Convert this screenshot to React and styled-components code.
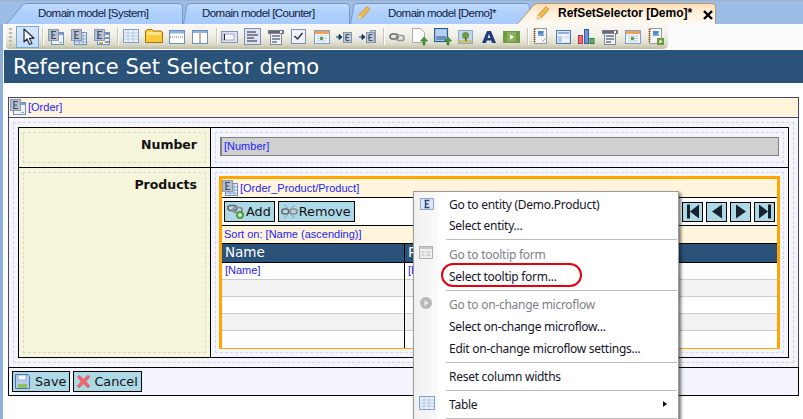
import React from "react";
import styled, { createGlobalStyle } from "styled-components";

const Global = createGlobalStyle`
  html, body { margin: 0; padding: 0; background: #fff; overflow: hidden; }
  #root { width: 803px; height: 419px; }
  * { box-sizing: border-box; }
`;

const Page = styled.div`
  position: relative; width: 803px; height: 419px; overflow: hidden;
  display: flex; flex-direction: column; background: #fff;
  font-family: "Liberation Sans", Arial, sans-serif;
`;
const TabStrip = styled.div`
  height: 24px; flex: none; display: flex; padding: 2px 0 0 6px;
  background: #9dbde6; border-top: 1px solid #a3b1c6;
`;
const Tab = styled.div`
  position: relative; flex: none; height: 21px;
  width: ${p => p.$w}px; margin-left: ${p => p.$ml || 0}px;
  z-index: ${p => p.$z || 1};
  display: flex; align-items: center;
  padding-left: ${p => p.$pl}px; padding-bottom: 2px;
  font-size: 11.5px; letter-spacing: -0.55px; color: #10203a;
  ${p => p.$active && "font-weight: 700; font-size: 12px; letter-spacing: -0.03px; color: #000;"}
  white-space: pre;
`;
const TabFill = styled.svg`
  position: absolute; left: 0; top: 0;
`;
const TabLabel = styled.span`position: relative;`;
const TabPencil = styled.svg`position: absolute; left: ${p => p.$x}px; top: 2px;`;
const TabClose = styled.span`
  position: absolute; right: 2px; top: 6px; width: 12px; height: 12px;
`;

const Frame = styled.div`
  flex: 1; display: flex; flex-direction: column;
  border-left: 3px solid #8eafde; box-shadow: inset 1px 0 0 #fff;
`;
const ToolRow = styled.div`
  height: 26px; flex: none; background: #fbfbfb; padding-left: 3px;
  display: flex; border-bottom: 1px solid #fff;
`;
const Toolbar = styled.div`
  width: 662px; height: 25px; display: flex; align-items: center; padding-left: 3px;
  border-radius: 0 0 5px 3px;
  background: linear-gradient(#f9f8f4 0%, #f1f0e8 45%, #dddccb 80%, #bdbca0 100%);
`;
const Grip = styled.span`
  width: 3px; height: 17px; margin: 0 4px 0 0;
  background: repeating-linear-gradient(#b9b9b0 0 2px, transparent 2px 4px);
`;
const ToolBtn = styled.span`
  flex: none; width: 23px; height: 22px;
  display: flex; align-items: center; justify-content: center;
  ${p => p.$active && "background: linear-gradient(#d6e8ff,#c3dcfb); border: 1px solid #7ba6dc;"}
`;
const ToolSep = styled.span`
  flex: none; width: 1px; height: 17px; margin: 0 1px 0 ${p => p.$l || 3}px; background: #c8c7b8;
  box-shadow: 1px 0 0 #fff;
`;
const Header = styled.div`
  height: 33px; flex: none; margin-left: 1px; background: #2b5278; color: #fff;
  display: flex; align-items: center; padding: 1px 0 0 9px;
  font-family: "DejaVu Sans", Verdana, sans-serif; font-size: 21px;
`;
const Content = styled.div`
  flex: 1; padding: 14px 4px 0 5px; display: flex; flex-direction: column;
`;
const TitleBar = styled.div`
  height: 21px; flex: none; display: flex; align-items: center; gap: 2px; padding: 0 0 1px 1px;
  background: #fff5dc; border: 1px solid #46466a;
  color: #2222ff; font-size: 11px;
`;
const FormBody = styled.div`
  height: 249px; flex: none; background: #f3f4fc;
  border: solid #46466a; border-width: 0 1px; padding: 4px;
`;
const Dashed = styled.div`
  height: 100%; border: 1px dashed #d4d4d8; padding: 4px;
`;
const FormTable = styled.div`
  height: 231px; border: 1px solid #000; display: grid;
  grid-template-columns: 192px 1fr; grid-template-rows: 40px 1fr;
`;
const LabelCell = styled.div`
  background: #f5f5dc; padding: 4px; border-right: 1px solid #000;
  ${p => p.$first && "border-bottom: 1px solid #000;"}
`;
const DashedLabel = styled.div`
  height: 100%; border: 1px dashed #d8d8d0; padding: 4px 8px 0 0;
  text-align: right; font: bold 12.5px "DejaVu Sans", Verdana, sans-serif; color: #111;
`;
const ValueCell = styled.div`
  background: #f3f4fc; padding: 4px;
  ${p => p.$first && "border-bottom: 1px solid #000;"}
`;
const DashedValue = styled.div`
  height: 100%; border: 1px dashed #d8d8e0; padding: ${p => p.$p || "4px"};
`;
const TextInput = styled.div`
  height: 19px; background: #d0d0d0; border: 1px solid #808080; border-width: 1px 1px 1px 2px;
  display: flex; align-items: center; padding: 0 0 1px 2px; color: #2222ff; font-size: 11px;
`;
const DataGrid = styled.div`
  height: 173px; border: 3px solid #ffa500; background: #fff; display: flex; flex-direction: column;
`;
const GridTitle = styled.div`
  height: 18px; flex: none; background: #fff5dc; display: flex; align-items: center; gap: 2px; padding-bottom: 1px;
  color: #2222ff; font-size: 11px;
`;
const GridTools = styled.div`
  height: 29px; flex: none; background: #fff; display: flex; align-items: center; gap: 3px; padding-left: 2px;
  border: solid #000; border-width: 1px 0;
`;
const Action = styled.div`
  height: 21px; flex: none; display: flex; align-items: center; gap: ${p => p.$gap}px;
  padding: 0 3px 1px 2px; background: #add8e6; border: 1px solid #000;
  font: 12.8px "DejaVu Sans", Verdana, sans-serif; color: #111;
`;
const Pager = styled.div`
  margin-left: auto; margin-right: 2px; display: flex; gap: 3px;
`;
const PagerBtn = styled.div`
  width: 21px; height: 20px; background: #add8e6; border: 1px solid #000;
  display: flex; align-items: center; justify-content: center;
`;
const SortRow = styled.div`
  height: 17px; flex: none; background: #fff5dc; display: flex; align-items: center; padding: 0 0 1px 2px;
  color: #2222ff; font-size: 11px;
`;
const GridHead = styled.div`
  height: 20px; flex: none; background: #2b5278; color: #fff; display: grid;
  grid-template-columns: 183px 1fr; border-bottom: 1px solid #000;
  border-top: 1px solid #000;
  font: 13.5px "DejaVu Sans", Verdana, sans-serif;
`;
const HeadCell = styled.div`
  padding-left: 3px; line-height: 17px; overflow: hidden;
  ${p => p.$first && "border-right: 1px solid #000;"}
`;
const GridRow = styled.div`
  height: 17px; flex: none; display: grid; grid-template-columns: 183px 1fr;
  background: ${p => p.$alt ? "#f2f2f2" : "#fff"};
  ${p => !p.$last && "border-bottom: 1px solid #ccc;"}
  color: #2222ff; font-size: 11px; line-height: 14px;
`;
const RowCell = styled.div`
  padding-left: 3px; overflow: hidden;
  ${p => p.$first && "border-right: 1px solid #000; height: 17px; margin-bottom: -1px;"}
`;
const Footer = styled.div`
  height: 29px; flex: none; background: #f3f4fc; border: 1px solid #000;
  display: flex; align-items: center; gap: 3px; padding-left: 3px;
`;
const Menu = styled.div`
  position: absolute; left: 413px; top: 191px; width: 266px; height: 240px;
  background: linear-gradient(90deg, #f0f0f0 0, #fafafa 24px, #fff 25px);
  border: 1px solid #9a9a9a; box-shadow: 2px 2px 3px rgba(0,0,0,.55);
  padding-top: 1px; font: 12px "Noto Sans", "Open Sans", sans-serif; color: #1a1a2a;
`;
const MenuItem = styled.div`
  height: ${p => p.$h || 22}px; flex: none; display: flex; align-items: center; padding-left: 35px; position: relative;
  letter-spacing: -0.27px;
  color: ${p => p.$off ? "#80808a" : "#14142a"};
`;
const MenuIcon = styled.span`
  position: absolute; left: 5px; top: 3px; width: 16px; height: 16px; display: flex;
`;
const MenuSep = styled.div`
  height: 1px; margin: 3px 1px ${p => p.$after || 2}px 32px; background: #bdbdbd;
`;
const Arrow = styled.span`
  position: absolute; right: 11px; top: 8px; width: 0; height: 0;
  border-left: 4px solid #111; border-top: 3.5px solid transparent; border-bottom: 3.5px solid transparent;
`;
const RedRing = styled.span`
  position: absolute; left: 27px; top: 71px; width: 141px; height: 24px;
  border: 2px solid #e8000e; border-radius: 12px; pointer-events: none;
`;

const EBox = () => (
  <>
    <rect x=".5" y=".5" width="10" height="11" fill="#b7bfcc" stroke="#8f98a8" />
    <path d="M3 2.5h5M4 2.5v7M4 6h3M3 9.5h5" stroke="#33506f" strokeWidth="1.2" fill="none" />
  </>
);
const FormIcon = ({ s = 16 }) => (
  <svg width={s} height={s} viewBox="0 0 16 16">
    <rect x="3.5" y="3.5" width="12" height="12" fill="#eef3fb" stroke="#6d8fc0" />
    <rect x="4" y="4" width="11" height="2" fill="#7da3d8" />
    <rect x="11" y="13" width="3" height="1" fill="#8aa" />
    <EBox />
  </svg>
);
const GridFormIcon = ({ s = 16, list }) => (
  <svg width={s} height={s} viewBox="0 0 16 16">
    <rect x="3.5" y="3.5" width="12" height="12" fill="#eef3fb" stroke="#6d8fc0" />
    {list ? <path d="M11 5h4M11 9h4M11 13h4" stroke="#234" /> :
      <path d="M4 7h11M4 10h11M4 13h11M8 4v11M12 4v11" stroke="#7da3d8" />}
    {list && <path d="M5 14h4" stroke="#a98a2a" strokeWidth="1.4" />}
    <EBox />
  </svg>
);
const Cursor = () => (
  <svg width="16" height="18" viewBox="0 0 16 18">
    <path d="M4 1v13l3-3 2.5 5.5 2.5-1-2.6-5.2H14z" fill="#f2f6fb" stroke="#26303c" strokeWidth="1.2" strokeLinejoin="round" />
  </svg>
);
const TableIcon = () => (
  <svg width="16" height="15" viewBox="0 0 16 15">
    <rect x=".5" y=".5" width="15" height="13" fill="#eef3fb" stroke="#7b9fd2" />
    <path d="M1 4h14M1 7h14M1 10h14M5 1v12M10 1v12" stroke="#b4c9e8" />
  </svg>
);
const FolderIcon = () => (
  <svg width="18" height="15" viewBox="0 0 18 15">
    <path d="M.5 13.5V2L2 .5h5L8 2h8l1.5 1v10.5z" fill="#ffc93c" stroke="#a47508" />
    <path d="M2 3h14v3H2z" fill="#ffe38a" />
  </svg>
);
const SplitH = () => (
  <svg width="16" height="14" viewBox="0 0 16 14">
    <rect x=".5" y=".5" width="15" height="13" fill="#fff" stroke="#6d8fc0" />
    <rect x="1" y="1" width="14" height="2.5" fill="#8fb0de" />
    <path d="M1 7h14" stroke="#666" strokeDasharray="1 1" />
  </svg>
);
const SplitV = () => (
  <svg width="16" height="14" viewBox="0 0 16 14">
    <rect x=".5" y=".5" width="15" height="13" fill="#fff" stroke="#6d8fc0" />
    <rect x="1" y="1" width="14" height="2" fill="#8fb0de" />
    <path d="M8 3v10" stroke="#777" />
  </svg>
);
const TextBoxIcon = () => (
  <svg width="17" height="12" viewBox="0 0 17 12">
    <rect x=".5" y=".5" width="16" height="11" fill="#dfe2f5" stroke="#8594b4" />
    <rect x="2" y="3" width="11" height="6" fill="#f4f5ff" stroke="#aab" />
    <path d="M3.5 3v6" stroke="#224" />
  </svg>
);
const TextAreaIcon = () => (
  <svg width="17" height="17" viewBox="0 0 17 17">
    <rect x=".5" y=".5" width="16" height="16" fill="#dfe2f5" stroke="#7f8fb0" />
    <path d="M3 4h9M3 7h11M3 10h7M3 13h10" stroke="#223" />
  </svg>
);
const DropIcon = () => (
  <svg width="16" height="16" viewBox="0 0 16 16">
    <rect x=".5" y="1.5" width="15" height="3" fill="#667" stroke="#778" />
    <rect x="12" y="2" width="2" height="2" fill="#fff" />
    <rect x="2.5" y="4.5" width="11" height="11" fill="#f2f2fb" stroke="#889" />
    <path d="M4 7h8M4 10h8M4 13h5" stroke="#234" />
  </svg>
);
const CheckIcon = () => (
  <svg width="15" height="15" viewBox="0 0 15 15">
    <rect x=".5" y=".5" width="14" height="14" fill="#eef0fb" stroke="#7f8fb0" />
    <path d="M3.5 7l3 3 5-6" stroke="#334" strokeWidth="1.5" fill="none" />
  </svg>
);
const CalIcon = () => (
  <svg width="16" height="14" viewBox="0 0 16 14">
    <rect x=".5" y=".5" width="15" height="13" fill="#f3f6fb" stroke="#7b9fd2" />
    <rect x="1" y="1" width="14" height="3" fill="#f4a050" />
    <path d="M3 6h10M3 8.5h10M3 11h10" stroke="#bcd" />
    <rect x="6" y="7" width="3" height="3" fill="#5aa050" />
  </svg>
);
const RefIcon = ({ stack }) => (
  <svg width="18" height="16" viewBox="0 0 18 16">
    {stack && <rect x="11.5" y="1.5" width="5" height="12" fill="#c5d2e4" stroke="#8a9bb5" />}
    <path d="M0 8h4M3 5.5L6 8l-3 2.5z" fill="#163a6e" stroke="#163a6e" />
    <rect x="7.5" y="3.5" width="8" height="10" fill="#c0cad8" stroke="#8a93a3" />
    <path d="M10 5.5h3.5M10 5.5v6M10 8.5h3M10 11.5h3.5" stroke="#35506f" strokeWidth="1.2" fill="none" />
  </svg>
);
const ChainIcon = ({ s = 16 }) => (
  <svg width={s} height={s * .75} viewBox="0 0 16 12">
    <rect x="1" y="3" width="8" height="5" rx="2.5" fill="none" stroke="#68686c" strokeWidth="1.7" />
    <rect x="7" y="4.5" width="8" height="5" rx="2.5" fill="none" stroke="#98989c" strokeWidth="1.7" />
  </svg>
);
const NewDoc = () => (
  <svg width="17" height="18" viewBox="0 0 17 18">
    <path d="M1.5 .5h8l4 4v10h-12z" fill="#fbfbfb" stroke="#aaa" />
    <path d="M12 17v-4H9.5l3.5-4 3.5 4H14v4z" fill="#4a9d3c" stroke="#2a6d20" strokeWidth=".6" />
  </svg>
);
const PictureUp = () => (
  <svg width="18" height="18" viewBox="0 0 18 18">
    <rect x=".5" y=".5" width="13" height="13" fill="#b4d0f0" stroke="#2a5a95" strokeWidth="1.2" />
    <rect x="2" y="8" width="10" height="4" fill="#6a90c0" />
    <path d="M13 17v-4h-2.5l3.5-4 3.5 4H15v4z" fill="#4a9d3c" stroke="#2a6d20" strokeWidth=".6" />
  </svg>
);
const TreePic = () => (
  <svg width="15" height="14" viewBox="0 0 15 14">
    <rect x=".5" y=".5" width="14" height="13" fill="#c0d8ee" stroke="#8fa8c8" />
    <rect x="1" y="10" width="13" height="3" fill="#d0c070" />
    <circle cx="7.5" cy="5.5" r="3.5" fill="#6f9a3f" />
    <rect x="7" y="8" width="1.5" height="3" fill="#6a5a30" />
  </svg>
);
const LetterA = () => (
  <svg width="14" height="14" viewBox="0 0 14 14">
    <path d="M0 13L5 1h4l5 12h-4l-.8-2.5H4.8L4 13zM5.7 8h2.6L7 4z" fill="#1e3e7e" />
  </svg>
);
const VideoIcon = () => (
  <svg width="17" height="12" viewBox="0 0 17 12">
    <rect width="17" height="12" fill="#6f9a3f" />
    <rect x="4" y="1" width="9" height="10" fill="#8cb060" />
    <path d="M7 3.5l4 2.5-4 2.5z" fill="#fff" />
  </svg>
);
const Note = ({ pen, play }) => (
  <svg width="16" height="17" viewBox="0 0 16 17">
    <rect x="1.5" y=".5" width="12" height="15" fill="#f4f6f8" stroke="#999" />
    <path d="M1.5 1v14" stroke="#a25a20" strokeWidth="2" strokeDasharray="1 1" />
    <path d="M5 4h6M5 7h6" stroke="#4e88d0" strokeWidth="1.4" />
    <rect x="5" y="3" width="5" height="3" fill="#4e88d0" />
    {pen && <path d="M9 14l4-4" stroke="#aaa" />}
    {play && <><rect x="9" y="10" width="7" height="7" fill="#6f9a3f" /><path d="M11.5 11.5l3 2-3 2z" fill="#fff" /></>}
  </svg>
);
const LayoutIcon = () => (
  <svg width="15" height="14" viewBox="0 0 15 14">
    <rect x=".5" y=".5" width="14" height="13" fill="#eef3fb" stroke="#4e78b0" strokeWidth="1.2" />
    <rect x="2" y="2" width="11" height="2" fill="#8fb0de" />
    <rect x="2" y="6" width="4" height="6" fill="#b9cde8" />
    <rect x="8" y="6" width="5" height="2" fill="#d4dff0" />
  </svg>
);
const BarsIcon = () => (
  <svg width="17" height="15" viewBox="0 0 17 15">
    <rect x=".5" y="6.5" width="4" height="8" fill="#f06a78" stroke="#b03545" />
    <rect x="6.5" y=".5" width="4" height="14" fill="#6a95d8" stroke="#33609f" />
    <rect x="12" y="9.5" width="4" height="5" fill="#6bb06b" stroke="#2d7a3a" />
  </svg>
);

const Floppy = () => (
  <svg width="15" height="15" viewBox="0 0 15 15">
    <path d="M.5.5h12l2 2v12H.5z" fill="#b6cdec" stroke="#4a74ac" />
    <rect x="3" y="1" width="8" height="5" fill="#f4f7fc" stroke="#6c8fbf" strokeWidth=".6" />
    <rect x="3" y="10" width="9" height="4" fill="#8fc060" />
  </svg>
);
const RedX = () => (
  <svg width="15" height="15" viewBox="0 0 15 15">
    <path d="M1.5 3L3 1.2l4.5 4 4.5-4L13.8 3l-4 4.5 4 4.5-1.8 1.8-4.5-4-4.5 4L1.2 12l4-4.5z" fill="#f4676b" stroke="#e04c52" strokeWidth=".6" />
  </svg>
);
const AddIcon = () => (
  <svg width="18" height="16" viewBox="0 0 18 16">
    <rect x=".8" y="2.5" width="9" height="5" rx="2.5" fill="none" stroke="#68686c" strokeWidth="1.7" />
    <rect x="6" y="4.5" width="9" height="5" rx="2.5" fill="none" stroke="#8b8b90" strokeWidth="1.7" />
    <circle cx="13" cy="12" r="3.6" fill="#5cae4a" stroke="#2f7f2c" strokeWidth=".7" />
    <path d="M11 12h4M13 10v4" stroke="#fff" strokeWidth="1.2" />
  </svg>
);
const RemoveIcon = () => (
  <svg width="17" height="15" viewBox="0 0 17 15">
    <rect x=".8" y="5" width="7" height="5" rx="2.5" fill="none" stroke="#6b6b70" strokeWidth="1.6" />
    <rect x="9" y="5" width="7" height="5" rx="2.5" fill="none" stroke="#8b8b90" strokeWidth="1.6" />
    <path d="M3 1l4 3M14 1l-4 3M3 14l4-3M14 14l-4-3" stroke="#7aa0d8" />
  </svg>
);
const PagerIcon = ({ kind }) => {
  const paths = {
    first: "M2 1h3v14H2zM14 1v14L5 8z",
    prev: "M13 1v14L3 8z",
    next: "M3 1v14l10-7z",
    last: "M2 1v14l9-7zM11 1h3v14h-3z",
  };
  return <svg width="16" height="17" viewBox="0 0 16 16"><path d={paths[kind]} fill="#18222e" /></svg>;
};
const EntityMenuIcon = () => (
  <svg width="16" height="16" viewBox="0 0 16 16">
    <rect x="1.5" y="2.5" width="13" height="11" fill="#dde5f2" stroke="#93a8c8" />
    <path d="M5.5 4.5h5M6.5 4.5v7M6.5 8h3M5.5 11.5h5" stroke="#28487a" strokeWidth="1.3" fill="none" />
  </svg>
);
const TooltipMenuIcon = () => (
  <svg width="16" height="14" viewBox="0 0 16 14">
    <rect x=".5" y=".5" width="13" height="12" fill="#efefef" stroke="#b0b0b0" />
    <rect x="1" y="1" width="12" height="2" fill="#c8c8c8" />
    <path d="M2.5 6h3M2.5 9h3M7.5 6h4M7.5 9h4" stroke="#b5b5b5" />
  </svg>
);
const FlowMenuIcon = () => (
  <svg width="14" height="14" viewBox="0 0 14 14">
    <circle cx="7" cy="7" r="6" fill="#b8b8b8" />
    <path d="M5.5 4l4 3-4 3z" fill="#eee" />
  </svg>
);
const TabPencilIcon = ({ x }) => (
  <TabPencil $x={x} width="14" height="15" viewBox="0 0 14 15">
    <path d="M1 14l1-4 8-8.5 3 2.8L5 13z" fill="#f3b94c" stroke="#b98a3c" strokeWidth=".8" />
    <path d="M1 14l1-4 3 3z" fill="#f6e4c4" />
  </TabPencil>
);
const TabShape = ({ w, active, notch }) => {
  const stroke = active ? "#b79a6e" : "#6e98ce";
  const id = active ? "tabA" : "tabI";
  const d = `M.5 21 L${notch - 3} 1.8 Q${notch - 1} .5 ${notch + 2} .5 H${w - 4} Q${w - .5} .5 ${w - .5} 4 V21`;
  return (
    <TabFill width={w} height="21">
      <defs>
        <linearGradient id={id} x1="0" y1="0" x2="0" y2="1">
          <stop offset="0" stopColor={active ? "#ffdcb0" : "#c3dcfd"} />
          <stop offset=".45" stopColor={active ? "#fff0dc" : "#afd0fc"} />
          <stop offset="1" stopColor={active ? "#fffaf3" : "#a8cbfb"} />
        </linearGradient>
      </defs>
      <path d={d} fill={`url(#${id})`} stroke={stroke} />
    </TabFill>
  );
};
const TabItem = ({ w, ml, z, pl, notch = 20, active, pencil, close, children }) => (
  <Tab $w={w} $ml={ml} $z={z} $pl={pl} $active={active}>
    <TabShape w={w} active={active} notch={notch} />
    {pencil !== undefined && <TabPencilIcon x={pencil} />}
    <TabLabel>{children}</TabLabel>
    {close && (
      <TabClose>
        <svg width="12" height="12" viewBox="0 0 12 12">
          <path d="M2 2l8 8M10 2l-8 8" stroke="#000" strokeWidth="2.4" />
        </svg>
      </TabClose>
    )}
  </Tab>
);

export default function App() {
  return (
    <Page>
      <Global />
      <TabStrip>
        <TabItem w={177} z={4} pl={32}>Domain model [System]</TabItem>
        <TabItem w={167} z={3} pl={19} notch={7}>Domain model [Counter]</TabItem>
        <TabItem w={180} z={2} pl={38} notch={7} pencil={7}>Domain model [Demo]*</TabItem>
        <TabItem w={199} ml={-13} z={5} pl={41} active pencil={19} close>RefSetSelector [Demo]*</TabItem>
      </TabStrip>
      <Frame>
        <ToolRow>
          <Toolbar>
            <Grip />
            <ToolBtn $active><Cursor /></ToolBtn>
            <ToolSep $l={3} />
            <ToolBtn><FormIcon /></ToolBtn>
            <ToolBtn><GridFormIcon /></ToolBtn>
            <ToolBtn><GridFormIcon list /></ToolBtn>
            <ToolSep $l={4} />
            <ToolBtn><TableIcon /></ToolBtn>
            <ToolBtn><FolderIcon /></ToolBtn>
            <ToolBtn><SplitH /></ToolBtn>
            <ToolBtn><SplitV /></ToolBtn>
            <ToolSep $l={5} />
            <ToolBtn><TextBoxIcon /></ToolBtn>
            <ToolBtn><TextAreaIcon /></ToolBtn>
            <ToolBtn><DropIcon /></ToolBtn>
            <ToolBtn><CheckIcon /></ToolBtn>
            <ToolBtn><CalIcon /></ToolBtn>
            <ToolBtn><RefIcon /></ToolBtn>
            <ToolBtn><RefIcon stack /></ToolBtn>
            <ToolSep $l={4} />
            <ToolBtn><ChainIcon /></ToolBtn>
            <ToolBtn><NewDoc /></ToolBtn>
            <ToolBtn><PictureUp /></ToolBtn>
            <ToolBtn><TreePic /></ToolBtn>
            <ToolBtn><LetterA /></ToolBtn>
            <ToolBtn><VideoIcon /></ToolBtn>
            <ToolSep $l={4} />
            <ToolBtn><Note pen /></ToolBtn>
            <ToolBtn><LayoutIcon /></ToolBtn>
            <ToolBtn><BarsIcon /></ToolBtn>
            <ToolBtn><DropIcon /></ToolBtn>
            <ToolBtn><CalIcon /></ToolBtn>
            <ToolBtn><Note play /></ToolBtn>
          </Toolbar>
        </ToolRow>
        <Header>Reference Set Selector demo</Header>
        <Content>
          <TitleBar><FormIcon />[Order]</TitleBar>
          <FormBody>
            <Dashed>
              <FormTable>
                <LabelCell $first><DashedLabel>Number</DashedLabel></LabelCell>
                <ValueCell $first><DashedValue><TextInput>[Number]</TextInput></DashedValue></ValueCell>
                <LabelCell><DashedLabel>Products</DashedLabel></LabelCell>
                <ValueCell>
                  <DashedValue $p="3px">
                    <DataGrid>
                      <GridTitle><GridFormIcon />[Order_Product/Product]</GridTitle>
                      <GridTools>
                        <Action $gap={1}><AddIcon />Add</Action>
                        <Action $gap={1}><RemoveIcon />Remove</Action>
                        <Pager>
                          <PagerBtn><PagerIcon kind="first" /></PagerBtn>
                          <PagerBtn><PagerIcon kind="prev" /></PagerBtn>
                          <PagerBtn><PagerIcon kind="next" /></PagerBtn>
                          <PagerBtn><PagerIcon kind="last" /></PagerBtn>
                        </Pager>
                      </GridTools>
                      <SortRow>Sort on: [Name (ascending)]</SortRow>
                      <GridHead><HeadCell $first>Name</HeadCell><HeadCell>Price</HeadCell></GridHead>
                      <GridRow><RowCell $first>[Name]</RowCell><RowCell>[Price]</RowCell></GridRow>
                      <GridRow $alt><RowCell $first /><RowCell /></GridRow>
                      <GridRow><RowCell $first /><RowCell /></GridRow>
                      <GridRow $alt><RowCell $first /><RowCell /></GridRow>
                      <GridRow $last><RowCell $first /><RowCell /></GridRow>
                    </DataGrid>
                  </DashedValue>
                </ValueCell>
              </FormTable>
            </Dashed>
          </FormBody>
          <Footer>
            <Action $gap={5}><Floppy />Save</Action>
            <Action $gap={3}><RedX />Cancel</Action>
          </Footer>
        </Content>
      </Frame>
      <Menu>
        <MenuItem><MenuIcon><EntityMenuIcon /></MenuIcon>Go to entity (Demo.Product)</MenuItem>
        <MenuItem $h={21}>Select entity...</MenuItem>
        <MenuSep $after={3} />
        <MenuItem $off><MenuIcon><TooltipMenuIcon /></MenuIcon>Go to tooltip form</MenuItem>
        <MenuItem>Select tooltip form...</MenuItem>
        <MenuSep />
        <MenuItem $off><MenuIcon><FlowMenuIcon /></MenuIcon>Go to on-change microflow</MenuItem>
        <MenuItem>Select on-change microflow...</MenuItem>
        <MenuItem>Edit on-change microflow settings...</MenuItem>
        <MenuSep />
        <MenuItem>Reset column widths</MenuItem>
        <MenuSep />
        <MenuItem><MenuIcon><TableIcon /></MenuIcon>Table<Arrow /></MenuItem>
        <MenuSep />
        <RedRing />
      </Menu>
    </Page>
  );
}
